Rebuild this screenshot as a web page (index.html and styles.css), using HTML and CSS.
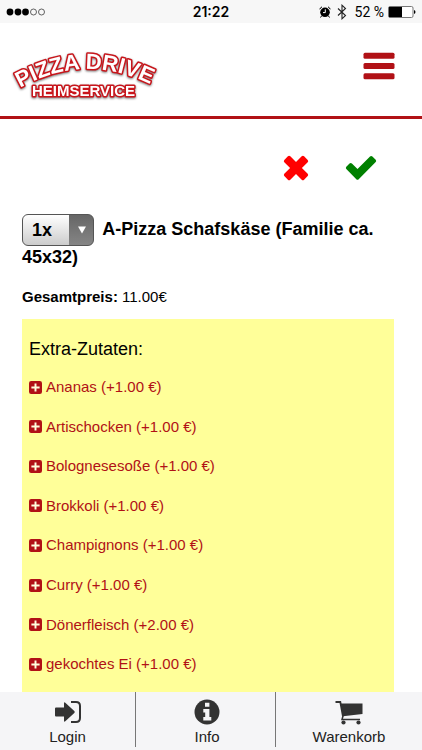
FILE: index.html
```html
<!DOCTYPE html>
<html lang="de">
<head>
<meta charset="utf-8">
<meta name="viewport" content="width=device-width, initial-scale=1">
<title>Pizza Drive Heimservice</title>
<link rel="stylesheet" href="styles.css">
</head>
<body>
<svg class="sprite" aria-hidden="true">
  <symbol id="plus" viewBox="0 0 12 12">
    <rect width="12" height="12" rx="2" fill="currentColor"/>
    <path d="M6 2.2v7.6M2.2 6h7.6" stroke="#ffd" stroke-width="1.8"/>
  </symbol>
</svg>
<div class="status">
  <svg class="signal" viewBox="0 0 40 8" role="img" aria-label="Signal">
    <circle cx="4" cy="4" r="3.4"/><circle cx="12" cy="4" r="3.4"/><circle cx="19.500" cy="4" r="3.4"/>
    <g fill="none" stroke="#222" stroke-width=".7"><circle cx="27.500" cy="4" r="3"/><circle cx="35.500" cy="4" r="3"/></g>
  </svg>
  <span class="time">21:22</span>
  <div class="indicators">
    <svg class="alarm" viewBox="0 0 12 12" role="img" aria-label="Wecker">
      <circle cx="6" cy="6.300" r="4.800"/>
      <path d="M.8 3.300Q1.300 1.500 3 .9M11.200 3.300Q10.700 1.500 9 .9M2.500 10l-1 1.500M9.500 10l1 1.500" fill="none" stroke="#000"/>
      <path d="M6.300 3.300v3.300H4" fill="none" stroke="#fff"/>
    </svg>
    <svg class="bluetooth" viewBox="0 0 10 16" role="img" aria-label="Bluetooth">
      <path d="M1 4.500l7.500 7L5 14.800V1.200l3.500 3.300-7.500 7" fill="none" stroke="#222" stroke-width="1.100"/>
    </svg>
    <span class="percent">52 %</span>
    <svg class="battery" viewBox="0 0 28 12" role="img" aria-label="Akku">
      <rect x=".5" y=".5" width="24.500" height="11" rx="1.500" fill="#fff" stroke="#777"/>
      <path d="M1 1h13v10H1z"/><path d="M26 4q1.500 .5 1.500 2T26 8z"/>
    </svg>
  </div>
</div>
<header class="header">
  <a class="logo" href="#" aria-label="Pizza Drive Heimservice">
    <svg viewBox="0 0 150 58">
      <defs><path id="arc" d="M10 43Q73 7 140 39"/></defs>
      <text class="arched"><textPath href="#arc">PIZZA DRIVE</textPath></text>
      <text class="straight" x="22" y="51">HEIMSERVICE</text>
    </svg>
  </a>
  <button class="menu" type="button" aria-label="Menü">
    <svg viewBox="0 0 32 28"><g fill="#b11116"><rect width="31" height="6" x=".5" y=".8" rx="1.500"/><rect width="31" height="6" x=".5" y="11" rx="1.500"/><rect width="31" height="6" x=".5" y="21.200" rx="1.500"/></g></svg>
  </button>
</header>
<main class="main">
  <div class="actions">
    <button type="button" aria-label="Abbrechen">
      <svg class="cross" viewBox="0 0 26 26"><path d="M1.300 4.900L4.900 1.300Q6.100 .3 7.300 1.300L13 7.100l5.700-5.800q1.200-1 2.400 0l3.600 3.600q1 1.200 0 2.400L18.900 13l5.800 5.700q1 1.200 0 2.400l-3.600 3.600q-1.200 1-2.400 0L13 18.900l-5.700 5.800q-1.200 1-2.400 0l-3.600-3.600q-1-1.200 0-2.400L7.100 13 1.300 7.300Q.3 6.100 1.300 4.900z" fill="#f00"/></svg>
    </button>
    <button type="button" aria-label="Bestätigen">
      <svg class="check" viewBox="0 0 32 26"><path d="M1.300 11.700l3.200-3.200q1.200-1 2.400 0l5.600 5.600L25 1.400q1.200-1 2.400 0l3.300 3.300q1 1.200 0 2.400L13.700 24.200q-1.200 1-2.400 0L1.300 14.100q-1-1.200 0-2.400z" fill="#008000"/></svg>
    </button>
  </div>
  <h1 class="product">
    <span class="quantity"><select aria-label="Anzahl"><option>1x</option><option>2x</option><option>3x</option></select><svg viewBox="0 0 10 8" aria-hidden="true"><path d="M1 .5h8L5 7.500z" fill="#fff"/></svg></span>
    A-Pizza Schafskäse (Familie ca. 45x32)
  </h1>
  <p class="price"><strong>Gesamtpreis:</strong> 11.00€</p>
  <section class="extras">
    <h2>Extra-Zutaten:</h2>
    <ul>
      <li><a href="#"><svg><use href="#plus"/></svg>Ananas (+1.00 €)</a></li>
      <li><a href="#"><svg><use href="#plus"/></svg>Artischocken (+1.00 €)</a></li>
      <li><a href="#"><svg><use href="#plus"/></svg>Bolognesesoße (+1.00 €)</a></li>
      <li><a href="#"><svg><use href="#plus"/></svg>Brokkoli (+1.00 €)</a></li>
      <li><a href="#"><svg><use href="#plus"/></svg>Champignons (+1.00 €)</a></li>
      <li><a href="#"><svg><use href="#plus"/></svg>Curry (+1.00 €)</a></li>
      <li><a href="#"><svg><use href="#plus"/></svg>Dönerfleisch (+2.00 €)</a></li>
      <li><a href="#"><svg><use href="#plus"/></svg>gekochtes Ei (+1.00 €)</a></li>
    </ul>
  </section>
</main>
<nav class="tabs">
  <a href="#">
    <svg viewBox="0 0 26 26"><path d="M0 9.500q0-1 1-1h8V4.200q0-1.500 1.300-.5l9 8.300q1 1 0 2l-9 8.300q-1.300 1-1.300-.5v-4.300H1q-1 0-1-1z" fill="#333"/><path d="M16 3h5q4 0 4 4v12q0 4-4 4h-5" fill="none" stroke="#333" stroke-width="2"/></svg>
    <span>Login</span>
  </a>
  <a class="info" href="#">
    <svg viewBox="0 0 26 26"><circle cx="13" cy="13" r="12.500" fill="#333"/><path d="M11 3.800h4.400v4H11zM9.300 10h6.100v8h1.900v3.400h-8V18h1.900v-4.600H9.300z" fill="#f5f5f7"/></svg>
    <span>Info</span>
  </a>
  <a href="#">
    <svg class="cart" viewBox="0 0 28 26"><path d="M.5 3h4.800L8 17.500" fill="none" stroke="#333" stroke-width="1.800"/><path d="M5.500 4.500h22V15L8 17.300z" fill="#333"/><path d="M8 17l-1 3.500h18" fill="none" stroke="#333" stroke-width="1.500"/><circle cx="8.500" cy="23.500" r="2.100" fill="#333"/><circle cx="23.500" cy="23.500" r="2.100" fill="#333"/></svg>
    <span>Warenkorb</span>
  </a>
</nav>
</body>
</html>
```
FILE: styles.css
```css
* { box-sizing: border-box; }

body {
  margin: 0;
  min-height: 100vh;
  display: flex;
  flex-direction: column;
  background: #fff;
  color: #000;
  font: 15px/20px "Liberation Sans", Arial, sans-serif;
}

svg { display: block; }
.sprite { display: none; }
a { color: inherit; text-decoration: none; }

button {
  padding: 0;
  border: 0;
  background: none;
}

.status {
  display: grid;
  grid-template-columns: 1fr auto 1fr;
  align-items: center;
  height: 23px;
  padding: 0 6px;
  background: #f7f7f7;
  font: 14px/20px Inter, sans-serif;
}

.signal { width: 40px; height: 8px; }
.time { font-weight: 600; }

.indicators {
  display: flex;
  justify-content: flex-end;
  align-items: center;
  gap: 4px;
}

.alarm { width: 12px; height: 12px; }
.bluetooth { width: 10px; height: 16px; margin: 0 4px 0 2px; }
.percent { font: 14px/20px Roboto, sans-serif; }
.battery { width: 28px; height: 12px; }

.header {
  display: flex;
  justify-content: space-between;
  align-items: flex-start;
  height: 96px;
  padding: 22px 27px 8px 10px;
  border-bottom: 3px solid #b11116;
}

.logo svg { width: 150px; height: 58px; overflow: visible; }

.logo text {
  fill: #fff;
  stroke: #c9151b;
  stroke-width: 3px;
  stroke-linejoin: round;
  paint-order: stroke;
  font-weight: bold;
  filter: drop-shadow(0 1px 1px #777);
}

.arched { font-size: 22px; }
.straight { font-size: 15px; }

.menu { margin-top: 7px; }
.menu svg { width: 32px; height: 28px; }

.main {
  flex: 1;
  display: flex;
  flex-direction: column;
  padding: 36px 28px 0 22px;
}

.actions {
  display: flex;
  justify-content: flex-end;
  gap: 36px;
  padding-right: 17px;
}

.cross { width: 26px; height: 26px; }
.check { width: 32px; height: 26px; }

.product {
  margin: 34px 0 0;
  font-size: 18px;
  line-height: 28px;
}

.quantity {
  position: relative;
  display: inline-block;
  margin: -3px 4px -3px 0;
  vertical-align: middle;
}

.quantity select {
  display: block;
  appearance: none;
  width: 72px;
  height: 32px;
  padding: 0 9px;
  border: 1px solid #555;
  border-radius: 6px;
  background: linear-gradient(#666, #858585) right / 24px 100% no-repeat, linear-gradient(#fff, #ccc);
  color: #000;
  font: bold 18px/28px "Liberation Sans", Arial, sans-serif;
}

.quantity svg {
  position: absolute;
  top: 12px;
  right: 7px;
  width: 10px;
  height: 8px;
  pointer-events: none;
}

.price { margin: 16px 0 12px; }

.extras {
  flex: 1;
  display: flex;
  flex-direction: column;
  padding: 16px 7px 8px;
  background: #ff9;
}

.extras h2 {
  margin: 0;
  font-size: 18px;
  font-weight: normal;
  line-height: 28px;
}

.extras ul {
  flex: 1;
  display: grid;
  grid-auto-rows: 1fr;
  margin: 4px 0 0;
  padding: 0;
  list-style: none;
}

.extras li { display: flex; align-items: center; }

.extras a {
  display: flex;
  align-items: center;
  gap: 4px;
  color: #b11116;
}

.extras a svg { width: 13px; height: 13px; }

.tabs {
  position: sticky;
  bottom: 0;
  display: grid;
  grid-template-columns: 135fr 140fr 147fr;
  height: 58px;
  padding-bottom: 4px;
  background: #f5f5f7;
  color: #222;
}

.tabs a {
  display: flex;
  flex-direction: column;
  align-items: center;
  padding-top: 7px;
}

.tabs a + a { border-left: 1px solid #777; }
.tabs .info { padding-left: 3px; }
.tabs svg { width: 26px; height: 26px; }
.tabs .cart { width: 28px; }
.tabs span { margin-top: 2px; }
```
